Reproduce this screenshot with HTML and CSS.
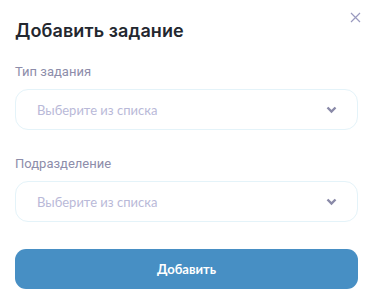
FILE: index.html
```html
<!DOCTYPE html>
<html lang="ru">
<head>
<meta charset="utf-8">
<link rel="stylesheet" href="styles.css">
</head>
<body>
<div class="modal">
  <button class="close" aria-label="Закрыть">
    <svg width="11" height="11" viewBox="0 0 11 11"><path d="M1 1L10 10M10 1L1 10" stroke="#9a9abf" stroke-width="1.2" fill="none"/></svg>
  </button>
  <h1 class="title">Добавить задание</h1>
  <div class="field">
    <label class="label">Тип задания</label>
    <div class="select">
      <span class="placeholder">Выберите из списка</span>
      <svg class="chev" width="11" height="8" viewBox="0 0 11 8"><path d="M1.5 1.5L5.5 5.5L9.5 1.5" stroke="#8a8aa8" stroke-width="2.4" fill="none"/></svg>
    </div>
  </div>
  <div class="field">
    <label class="label">Подразделение</label>
    <div class="select">
      <span class="placeholder">Выберите из списка</span>
      <svg class="chev" width="11" height="8" viewBox="0 0 11 8"><path d="M1.5 1.5L5.5 5.5L9.5 1.5" stroke="#8a8aa8" stroke-width="2.4" fill="none"/></svg>
    </div>
  </div>
  <button class="submit">Добавить</button>
</div>
</body>
</html>
```
FILE: styles.css
```css
* { box-sizing: border-box; }
html, body { margin: 0; padding: 0; background: #fff; }
.modal {
  position: relative;
  width: 373px;
  height: 301px;
  padding: 18px 15px 0 15px;
  display: flex;
  flex-direction: column;
}
.close {
  position: absolute;
  top: 12px;
  right: 12px;
  width: 11px;
  height: 11px;
  padding: 0;
  border: 0;
  background: none;
  display: flex;
}
.title {
  margin: 0;
  font-family: Inter, sans-serif;
  font-weight: 600;
  font-size: 18px;
  letter-spacing: 0.1px;
  line-height: 26px;
  color: #23272f;
}
.field {
  display: flex;
  flex-direction: column;
}
.field:first-of-type { margin-top: 20px; }
.label {
  font-family: Roboto, sans-serif;
  font-size: 13px;
  line-height: 16px;
  color: #8d8daa;
  margin-bottom: 9px;
}
.field + .field { margin-top: 26px; }
.select {
  height: 41px;
  border: 1px solid #e4f3f9;
  border-radius: 13px;
  display: flex;
  align-items: center;
  justify-content: space-between;
  padding: 0 20px 0 21px;
}
.placeholder {
  font-family: Lato, sans-serif;
  font-size: 13px;
  color: #b9b9d8;
}
.chev { display: block; margin-top: 1px; }
.submit {
  margin-top: 27px;
  height: 40px;
  border: 0;
  border-radius: 11px;
  background: #478fc4;
  color: #fff;
  font-family: Lato, sans-serif;
  font-weight: 700;
  font-size: 13px;
}
```
